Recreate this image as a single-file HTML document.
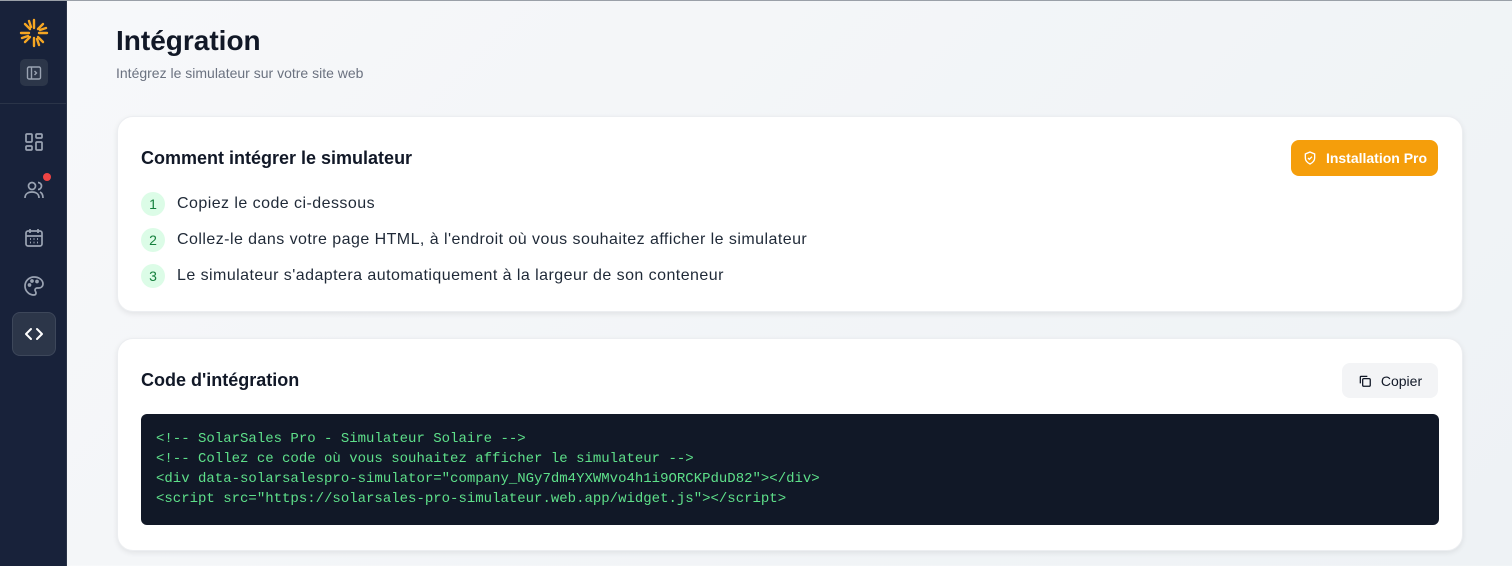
<!DOCTYPE html>
<html><head><meta charset="utf-8"><style>
*{box-sizing:border-box;margin:0;padding:0}
body{width:1512px;height:565px;overflow:hidden;font-family:"Liberation Sans",Arial,sans-serif;background:linear-gradient(135deg,#f7f8fa,#eef2f5);position:relative;border-top:1px solid #9aa0a8}
.side{position:absolute;left:0;top:0;width:67px;height:565px;background:#18223a;border-right:1px solid #2a3448}
.ic{position:absolute;left:22px;width:24px;height:24px}
.card{position:absolute;left:117px;width:1346px;background:#fff;border-radius:16px;box-shadow:0 2px 6px rgba(0,0,0,.08);border:1px solid #eceef1}
h1{position:absolute;left:116px;top:24px;font-size:28px;font-weight:700;color:#111827}
.sub{position:absolute;left:116px;top:64px;font-size:14px;color:#6b7280}
h2{position:absolute;left:23px;font-size:18px;font-weight:700;color:#111827}
.step{position:absolute;left:23px;font-size:16px;letter-spacing:0.45px;color:#1f2937;display:flex;align-items:center}
.num{width:24px;height:24px;border-radius:50%;background:#dcfce7;color:#15803d;font-size:14px;display:flex;align-items:center;justify-content:center;margin-right:12px;letter-spacing:0}
.code{position:absolute;left:23px;top:75px;width:1298px;height:111px;background:#111827;border-radius:6px;padding:15px 15px;font-family:"Liberation Mono",monospace;font-size:14px;line-height:20px;color:#5ee08a;white-space:pre}
</style></head><body>
<div class="side">
<svg class="ic" style="left:18px;top:16px;width:32px;height:32px" viewBox="0 0 32 32" stroke="#f5a623" stroke-width="2.4" stroke-linecap="round"><path d="M16 3v8M16 21v8M3 16h8M21 16h8M7 7l5 5M20 20l5 5M25 7l-5 5M12 20l-5 5M11 4l2 6M21 28l-2-6M4 21l6-2M28 11l-6 2"/></svg>
<div style="position:absolute;left:20px;top:58px;width:28px;height:27px;border-radius:5px;background:#2c3649"></div>
<svg class="ic" style="left:26px;top:64px;width:16px;height:16px" viewBox="0 0 16 16" fill="none" stroke="#9aa3b2" stroke-width="1.4"><rect x="1.5" y="2" width="13" height="12" rx="1.5"/><path d="M5.5 2v12M8.5 6l2 2-2 2"/></svg>
<div style="position:absolute;left:0;top:102px;width:67px;height:1px;background:#2a3448"></div>
<svg class="ic" style="top:129px" viewBox="0 0 24 24" fill="none" stroke="#9aa3b2" stroke-width="1.7"><rect x="4" y="4" width="6" height="8" rx="1"/><rect x="14" y="4" width="6" height="4" rx="1"/><rect x="14" y="12" width="6" height="8" rx="1"/><rect x="4" y="16" width="6" height="4" rx="1"/></svg>
<svg class="ic" style="top:177px" viewBox="0 0 24 24" fill="none" stroke="#9aa3b2" stroke-width="1.7"><circle cx="10" cy="8" r="3.5"/><path d="M3 20c0-4 3-6 7-6s7 2 7 6M16 4.5a3.5 3.5 0 010 7M18 14c2 1 3 3 3 6"/></svg>
<div style="position:absolute;left:43px;top:172px;width:8px;height:8px;border-radius:50%;background:#ef4444"></div>
<svg class="ic" style="top:225px" viewBox="0 0 24 24" fill="none" stroke="#9aa3b2" stroke-width="1.7"><rect x="4" y="5" width="16" height="15" rx="2"/><path d="M8 3v4M16 3v4M4 10h16M8 13h1M11.5 13h1M15 13h1M8 16.5h1M11.5 16.5h1M15 16.5h1"/></svg>
<svg class="ic" style="top:273px" viewBox="0 0 24 24" fill="none" stroke="#9aa3b2" stroke-width="1.7"><path d="M12 3a9 9 0 000 18c1.5 0 2-1 2-2 0-1.5-1-1.8-1-3 0-1 1-2 2-2h2a4 4 0 004-4c0-4-4-7-9-7z"/><circle cx="7.5" cy="11" r="1"/><circle cx="10" cy="7" r="1"/><circle cx="15" cy="7.5" r="1"/></svg>
<div style="position:absolute;left:12px;top:311px;width:44px;height:44px;border-radius:8px;background:#2c3649;border:1px solid #3d475a"></div>
<svg class="ic" style="top:321px" viewBox="0 0 24 24" fill="none" stroke="#fff" stroke-width="2" stroke-linecap="round" stroke-linejoin="round"><path d="M9 7l-5 5 5 5M15 7l5 5-5 5"/></svg>
</div>
<h1>Intégration</h1>
<div class="sub">Intégrez le simulateur sur votre site web</div>
<div class="card" style="top:115px;height:196px">
<h2 style="top:31px">Comment intégrer le simulateur</h2>
<div style="position:absolute;right:24px;top:23px;width:147px;height:36px;background:#f59e0b;border-radius:8px;color:#fff;font-size:14px;font-weight:700;display:flex;align-items:center;justify-content:center;gap:8px"><svg width="16" height="16" viewBox="0 0 24 24" fill="none" stroke="#fff" stroke-width="2"><path d="M12 3l7 3v6c0 4-3 7-7 9-4-2-7-5-7-9V6z"/><path d="M9 12l2 2 4-4"/></svg>Installation Pro</div>
<div class="step" style="top:75px"><span class="num">1</span>Copiez le code ci-dessous</div>
<div class="step" style="top:111px"><span class="num">2</span>Collez-le dans votre page HTML, à l'endroit où vous souhaitez afficher le simulateur</div>
<div class="step" style="top:147px"><span class="num">3</span>Le simulateur s'adaptera automatiquement à la largeur de son conteneur</div>
</div>
<div class="card" style="top:337px;height:213px">
<h2 style="top:31px">Code d'intégration</h2>
<div style="position:absolute;right:24px;top:24px;width:96px;height:35px;background:#f3f4f6;border-radius:8px;color:#111827;font-size:14px;display:flex;align-items:center;justify-content:center;gap:9px"><svg width="14" height="14" viewBox="0 0 24 24" fill="none" stroke="#111827" stroke-width="2.2"><rect x="8" y="8" width="13" height="13" rx="2"/><path d="M4 16V5a1 1 0 011-1h11"/></svg>Copier</div>
<div class="code">&lt;!-- SolarSales Pro - Simulateur Solaire --&gt;
&lt;!-- Collez ce code où vous souhaitez afficher le simulateur --&gt;
&lt;div data-solarsalespro-simulator="company_NGy7dm4YXWMvo4h1i9ORCKPduD82"&gt;&lt;/div&gt;
&lt;script src="https://solarsales-pro-simulateur.web.app/widget.js"&gt;&lt;/script&gt;</div>
</div>
</body></html>
